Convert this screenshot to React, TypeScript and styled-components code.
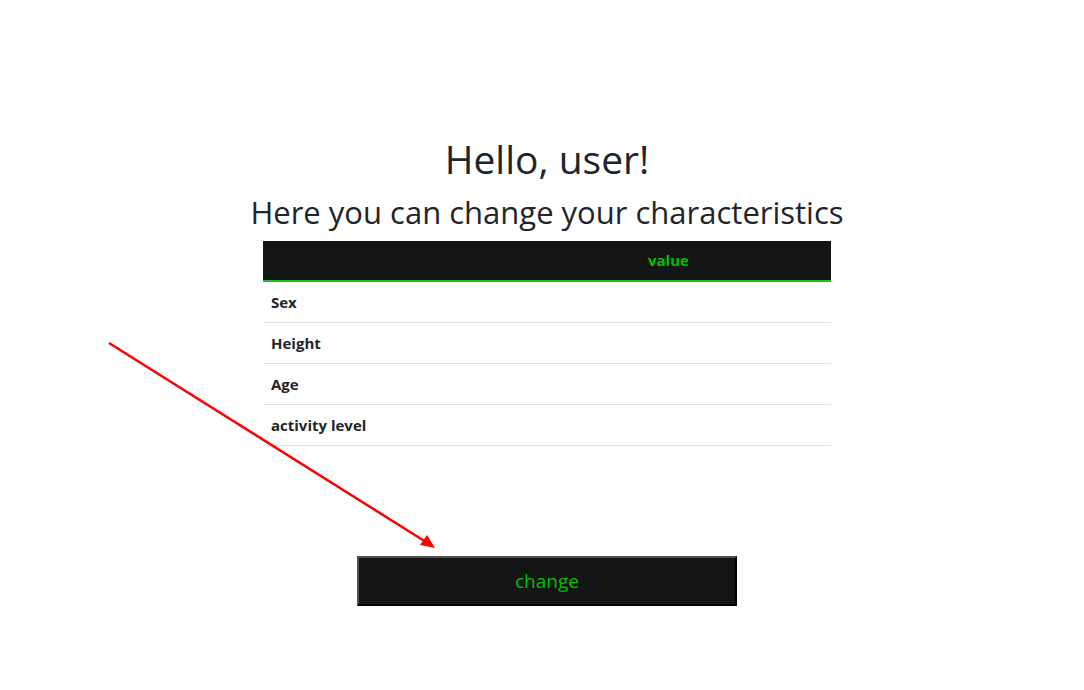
import React from "react";
import styled, { createGlobalStyle } from "styled-components";

const Global = createGlobalStyle`
  html, body { margin: 0; padding: 0; background: #fff; }
  body { font-family: "Open Sans", "Noto Sans", sans-serif; color: #212529; }
`;

const Page = styled.div`
  position: relative;
  width: 1084px;
  height: 690px;
  overflow: hidden;
`;

const Content = styled.main`
  display: flex;
  flex-direction: column;
  align-items: center;
  padding-top: 136px;
  padding-left: 10px;
`;

const Title = styled.h1`
  margin: 0;
  font-size: 39px;
  font-weight: 500;
  line-height: 1.2;
`;

const Subtitle = styled.h2`
  margin: 11px 0 0 0;
  font-size: 31px;
  font-weight: 500;
  line-height: 1.2;
`;

const Table = styled.table`
  width: 568px;
  margin-top: 10px;
  border-collapse: collapse;
  font-size: 15px;
`;

const HeadCell = styled.th<{ $w?: number }>`
  background: #151515;
  color: #00c000;
  height: 39px;
  padding: 0 8px;
  text-align: left;
  font-weight: 700;
  border-bottom: 2px solid #1fbf1f;
  width: ${(p) => (p.$w ? `${p.$w}px` : "auto")};
`;

const Row = styled.tr`
  border-bottom: 1px solid #dee2e6;
`;

const Cell = styled.td`
  height: 40px;
  padding: 0 8px;
  font-weight: 700;
  color: #212529;
`;

const Button = styled.button`
  margin-top: 110px;
  width: 380px;
  height: 50px;
  background: #151515;
  color: #00c000;
  font-family: "Open Sans", "Noto Sans", sans-serif;
  font-size: 19px;
  border-width: 2px;
  border-style: solid;
  border-color: #505050 #000 #000 #505050;
  cursor: pointer;
`;

const ArrowLayer = styled.svg`
  position: absolute;
  left: 0;
  top: 0;
  pointer-events: none;
`;

const rows = ["Sex", "Height", "Age", "activity level"];

export default function App() {
  return (
    <Page>
      <Global />
      <Content>
        <Title>Hello, user!</Title>
        <Subtitle>Here you can change your characteristics</Subtitle>
        <Table>
          <thead>
            <tr>
              <HeadCell $w={361}></HeadCell>
              <HeadCell>value</HeadCell>
            </tr>
          </thead>
          <tbody>
            {rows.map((r) => (
              <Row key={r}>
                <Cell>{r}</Cell>
                <Cell></Cell>
              </Row>
            ))}
          </tbody>
        </Table>
        <Button>change</Button>
      </Content>
      <ArrowLayer width="1084" height="690">
        <line x1="109" y1="343" x2="426" y2="542" stroke="#f00" strokeWidth="2.5" />
        <polygon points="435,548 420,545 427,535" fill="#f00" />
      </ArrowLayer>
    </Page>
  );
}
